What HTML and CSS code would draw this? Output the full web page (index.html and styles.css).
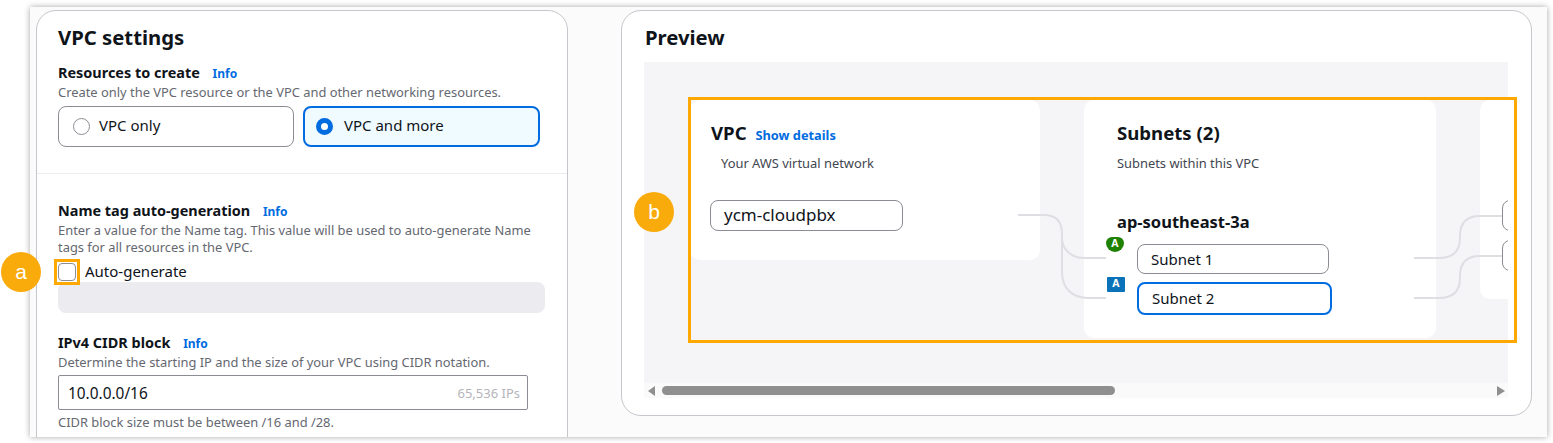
FILE: index.html
```html
<!DOCTYPE html>
<html lang="en">

<head>
    <meta charset="UTF-8" />
    <meta name="viewport" content="width=device-width, initial-scale=1.0" />
    <title>VPC settings</title>
    <link rel="stylesheet" href="styles.css">
</head>

<body>
    <div class="frame">
        <section class="panel settings">
            <div class="block top-block">
                <h2>VPC settings</h2>
                <div class="label">Resources to create <a href="#">Info</a></div>
                <p class="desc">Create only the VPC resource or the VPC and other networking resources.</p>
                <div class="choices">
                    <div class="choice"><span class="radio"></span>VPC only</div>
                    <div class="choice selected"><span class="radio"></span>VPC and more</div>
                </div>
            </div>
            <div class="block name-block">
                <div class="label">Name tag auto-generation <a href="#">Info</a></div>
                <p class="desc">Enter a value for the Name tag. This value will be used to auto-generate Name<br>tags for all resources in the VPC.</p>
                <div class="check-row"><span class="checkbox"></span>Auto-generate</div>
                <div class="disabled-input"></div>
                <div class="label cidr-label">IPv4 CIDR block <a href="#">Info</a></div>
                <p class="desc">Determine the starting IP and the size of your VPC using CIDR notation.</p>
                <div class="cidr-input"><span>10.0.0.0/16</span><small>65,536 IPs</small></div>
                <p class="desc cidr-hint">CIDR block size must be between /16 and /28.</p>
            </div>
        </section>

        <section class="panel preview">
            <h2>Preview</h2>
            <div class="diagram">
                <svg class="wires" width="864" height="321" viewBox="0 0 864 321" fill="none">
                    <path d="M374 153H400C412 153 418 160 418 172V176C418 188 428 196 440 196H462" />
                    <path d="M418 176V210C418 226 428 236 444 236H462" />
                    <path d="M770 196H795C810 196 816 188 816 176V174C816 162 822 154 836 154H858" />
                    <path d="M770 236H795C810 236 816 228 816 216V214C816 202 822 194 836 194H858" />
                </svg>

                <div class="card vpc-card">
                    <h3>VPC <a href="#">Show details</a></h3>
                    <p class="card-desc">Your AWS virtual network</p>
                    <div class="node">ycm-cloudpbx</div>
                </div>

                <div class="card subnet-card">
                    <h3>Subnets (2)</h3>
                    <p class="card-desc">Subnets within this VPC</p>
                    <h4>ap-southeast-3a</h4>
                    <div class="node subnet-one">Subnet 1</div>
                    <div class="node subnet-two">Subnet 2</div>
                </div>

                <span class="zone zone-green">A</span>
                <span class="zone zone-blue">A</span>

                <div class="card cut-card">
                    <div class="node cut-node"></div>
                    <div class="node cut-node"></div>
                </div>
            </div>
            <div class="scrollbar">
                <span class="arrow arrow-left"></span>
                <span class="thumb"></span>
                <span class="arrow arrow-right"></span>
            </div>
        </section>
    </div>

    <!-- callouts -->
    <div class="mark mark-check"></div>
    <div class="mark mark-diagram"></div>
    <div class="badge badge-a">a</div>
    <div class="badge badge-b">b</div>
</body>

</html>
```

FILE: styles.css
```css
* {
    box-sizing: border-box;
}

html,
body {
    height: 443px;
    overflow: hidden;
}

body {
    margin: 0;
    background: #fff;
    color: #0f141a;
    font-family: "Noto Sans", Arial, sans-serif;
    font-size: 15px;
    position: relative;
}

a {
    color: #006ce0;
    text-decoration: none;
    font-weight: 700;
}

h2,
h3,
h4,
p {
    margin: 0;
}

.frame {
    margin: 7px 6px 0 30px;
    height: 430px;
    display: flex;
    gap: 53px;
    padding: 3px 15px 0 6px;
    overflow: hidden;
    background: #fbfbfb;
    box-shadow: 0 0 6px rgba(0, 0, 0, 0.35);
}

.panel {
    background: #fff;
    border: 1px solid #c6c6cd;
    border-radius: 20px;
}

h2 {
    font-size: 20.3px;
    line-height: 28px;
    font-weight: 700;
}

/* left column */
.settings {
    width: 532px;
    height: 460px;
    flex-shrink: 0;
}

.block {
    padding: 0 21px;
}

.top-block {
    height: 163px;
    padding-top: 12px;
    border-bottom: 1px solid #ebebf0;
}

.label {
    font-size: 14.45px;
    line-height: 18px;
    font-weight: 700;
}

.label a {
    font-size: 12px;
    margin-left: 9px;
}

.top-block .label {
    margin-top: 13px;
}

.desc {
    font-size: 12.9px;
    line-height: 17px;
    margin-top: 1px;
    color: #656871;
}

.choices {
    display: flex;
    gap: 9px;
    margin-top: 5px;
}

.choice {
    width: 236px;
    height: 41px;
    border: 1px solid #8c8c94;
    border-radius: 8px;
    display: flex;
    align-items: center;
    padding: 0 0 3px 14px;
}

.choice .radio {
    width: 17px;
    height: 17px;
    margin: 3px 9px 0 0;
    border: 1px solid #8c8c94;
    border-radius: 50%;
}

.choice.selected {
    width: 237px;
    border: 2px solid #006ce0;
    background: #f0fbff;
    padding-left: 11px;
}

.choice.selected .radio {
    border: 5px solid #006ce0;
    background: #fff;
    margin-right: 11px;
}

.name-block {
    padding-top: 28px;
}

.check-row {
    display: flex;
    align-items: center;
    height: 18px;
    margin-top: 6px;
    line-height: 16px;
}

.checkbox {
    width: 18px;
    height: 18px;
    margin: 2px 9px 0 0;
    border: 1px solid #8c8c94;
    border-radius: 4px;
    background: #fff;
}

.disabled-input {
    width: 487px;
    height: 31px;
    margin-top: 2px;
    border-radius: 8px;
    background: #ebebf0;
}

.cidr-label {
    margin-top: 21px;
}

.cidr-input {
    width: 470px;
    height: 35px;
    margin-top: 4px;
    padding: 1px 7px 0 9px;
    border: 1px solid #8c8c94;
    border-radius: 2px;
    display: flex;
    align-items: center;
    justify-content: space-between;
    font-size: 15.4px;
}

.cidr-input small {
    font-size: 13px;
    color: #b4b4bb;
}

.cidr-hint {
    margin-top: 4px;
}

/* right column */
.preview {
    width: 911px;
    height: 406px;
    flex-shrink: 0;
    padding: 12px 22px 0 22px;
}

.preview h2 {
    padding-left: 1px;
}

.diagram {
    width: 864px;
    height: 321px;
    margin-top: 11px;
    background: #f5f5f8;
    position: relative;
    overflow: hidden;
}

.wires {
    position: absolute;
    left: 0;
    top: 0;
    z-index: 2;
}

.wires path {
    stroke: #dedee3;
    stroke-width: 2;
}

.card {
    position: absolute;
    top: 38px;
    background: #fff;
    border-radius: 10px;
}

.card h3 {
    font-size: 18.6px;
    line-height: 24px;
    font-weight: 700;
}

.card h3 a {
    font-size: 12.8px;
    margin-left: 4px;
}

.card-desc {
    font-size: 12.9px;
    line-height: 16px;
    color: #424650;
}

.vpc-card {
    left: 46px;
    width: 350px;
    height: 160px;
    padding: 21px 0 0 21px;
}

.vpc-card .card-desc {
    margin: 8px 0 0 10px;
}

.node {
    border: 1px solid #8c8c94;
    border-radius: 8px;
    background: #fff;
    display: flex;
    align-items: center;
}

.vpc-card .node {
    width: 193px;
    height: 31px;
    margin: 29px 0 0 -1px;
    padding: 0 0 2px 13px;
    font-size: 17px;
}

.subnet-card {
    left: 440px;
    width: 352px;
    height: 238px;
    padding: 21px 0 0 33px;
}

.subnet-card .card-desc {
    margin-top: 10px;
}

.subnet-card h4 {
    font-size: 16.5px;
    line-height: 22px;
    font-weight: 700;
    margin-top: 40px;
}

.node.subnet-one {
    width: 192px;
    height: 30px;
    margin: 11px 0 0 20px;
    padding-left: 13px;
}

.node.subnet-two {
    width: 195px;
    height: 33px;
    margin: 8px 0 0 20px;
    padding: 0 0 2px 13px;
    border: 2px solid #006ce0;
}

.zone {
    position: absolute;
    z-index: 3;
    width: 18px;
    color: #fff;
    font-size: 10.5px;
    font-weight: 700;
    line-height: 12px;
    text-align: center;
}

.zone-green {
    left: 462px;
    top: 175px;
    height: 15px;
    background: #1d8102;
    border-radius: 6px 6px 9px 9px;
}

.zone-blue {
    left: 463px;
    top: 215px;
    height: 15px;
    background: #0972b9;
    border-radius: 1px;
}

.cut-card {
    left: 836px;
    width: 40px;
    height: 199px;
    padding: 100px 0 0 22px;
}

.node.cut-node {
    height: 31px;
    margin-bottom: 9px;
}

.scrollbar {
    width: 864px;
    height: 15px;
    background: #fafafa;
    display: flex;
    align-items: center;
    padding: 0 3px 0 4px;
}

.thumb {
    width: 453px;
    height: 9px;
    margin-left: 7px;
    border-radius: 5px;
    background: #8f8f8f;
}

.arrow {
    width: 0;
    height: 0;
    border-top: 5px solid transparent;
    border-bottom: 5px solid transparent;
}

.arrow-left {
    border-right: 7px solid #8f8f8f;
}

.arrow-right {
    border-left: 8px solid #8f8f8f;
    margin-left: auto;
}

/* callouts */
.mark {
    position: absolute;
    border: 3px solid #ffa900;
    z-index: 5;
}

.mark-check {
    left: 54px;
    top: 259px;
    width: 26px;
    height: 26px;
}

.mark-diagram {
    left: 688px;
    top: 97px;
    width: 829px;
    height: 246px;
}

.badge {
    position: absolute;
    width: 40px;
    height: 40px;
    border-radius: 50%;
    background: #f9ab0c;
    color: #fff;
    font-family: "Liberation Sans", Arial, sans-serif;
    font-size: 21px;
    line-height: 40px;
    text-align: center;
    z-index: 6;
}

.badge-a {
    left: 1px;
    top: 252px;
}

.badge-b {
    left: 634px;
    top: 192px;
}
```
